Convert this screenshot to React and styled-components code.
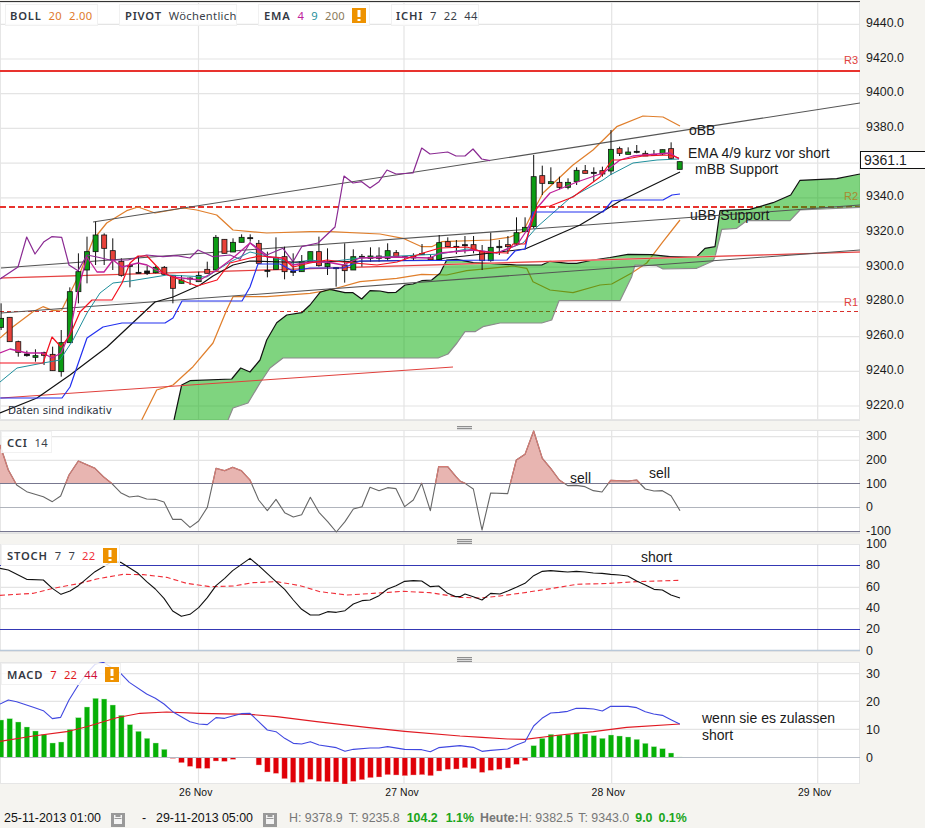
import React from 'react';
import styled, { createGlobalStyle } from 'styled-components';

const GlobalStyle = createGlobalStyle`
  html, body { margin: 0; padding: 0; background: #f5f4f0; }
  * { box-sizing: border-box; }
`;

const Root = styled.div`
  width: 925px;
  height: 828px;
  overflow: hidden;
  padding-top: 1px;
  background: #f5f4f0;
  font-family: "Liberation Sans", Arial, sans-serif;
  color: #222;
  display: flex;
  flex-direction: column;
`;
const PaneRow = styled.section`
  display: flex;
  height: ${p => p.$h}px;
  flex: none;
  position: relative;
`;
const ChartBox = styled.div`
  position: relative;
  width: 860px;
  height: 100%;
  flex: none;
  overflow: hidden;
  background: #fff;
  box-shadow: inset 0 0 0 1px #e6e6e6;
  border-top: ${p => (p.$top ? '1px solid #333' : '0')};
`;
const Plot = styled.svg`
  display: block;
  width: 860px;
  height: 100%;
`;
const Axis = styled.div`
  flex: 1;
  margin-top: ${p => p.$offset}px;
  padding-left: 6px;
  display: flex;
  flex-direction: column;
`;
const Tick = styled.div`
  height: ${p => p.$step}px;
  flex: none;
  display: flex;
  align-items: center;
  font-size: 12.4px;
  color: #1c1c1c;
`;
const LastPrice = styled.div`
  position: absolute;
  left: 860px;
  top: 150px;
  width: 65px;
  height: 18px;
  background: #fff;
  border: 1px solid #111;
  border-right: 0;
  padding-left: 3px;
  font-size: 14px;
  line-height: 16px;
  color: #222;
`;
const Handle = styled.div`
  height: ${p => p.$h}px;
  width: 860px;
  flex: none;
  border-top: 1px solid #e2e2e2;
  padding: ${p => p.$pad}px 0 0 457px;
`;
const Grip = styled.div`
  width: 15px;
  height: 5px;
  background: repeating-linear-gradient(#8f8f8f 0 1px, #dcdcdc 1px 2px);
`;
const LegendBar = styled.div`
  position: absolute;
  left: ${p => p.$left}px;
  top: ${p => p.$top}px;
  display: flex;
  gap: 21px;
`;
const Chip = styled.div`
  width: ${p => p.$w}px;
  height: 22px;
  padding-left: ${p => p.$pad || 5}px;
  display: flex;
  align-items: center;
  gap: 7px;
  background: rgba(255, 255, 255, 0.82);
  border: 1px solid rgba(240, 240, 240, 0.9);
  font-family: "Noto Sans", "Open Sans", sans-serif;
  font-size: 11.2px;
  white-space: nowrap;
`;
const ChipName = styled.b`
  font-weight: 600;
  letter-spacing: 0.8px;
  color: #333842;
`;
const ChipVal = styled.span`
  color: ${p => p.$c || '#3a3f4a'};
  letter-spacing: 0.3px;
`;
const Note = styled.span`
  position: absolute;
  left: ${p => p.$x}px;
  top: ${p => p.$y}px;
  font-size: ${p => p.$size || 14}px;
  line-height: 1;
  color: #1a1a1a;
  white-space: nowrap;
`;
const LevelTag = styled.span`
  position: absolute;
  right: 2px;
  top: ${p => p.$y}px;
  font-size: 11px;
  line-height: 1;
  color: ${p => p.$c};
`;
const Disclaimer = styled.span`
  position: absolute;
  left: 8px;
  top: 403px;
  font-family: "DejaVu Sans", sans-serif;
  font-size: 10.4px;
  line-height: 1;
  color: #2a3040;
  white-space: nowrap;
`;
const DateAxis = styled.div`
  height: 16px;
  width: 860px;
  flex: none;
  padding-left: 179px;
  display: flex;
  align-items: center;
`;
const DateLabel = styled.span`
  width: 206.3px;
  flex: none;
  font-size: 10.4px;
  letter-spacing: 0.1px;
  color: #111;
`;
const Footer = styled.footer`
  flex: 1;
  padding: 11px 0 0 4px;
  display: flex;
  align-items: flex-start;
  font-size: 12.4px;
  line-height: 14px;
  white-space: nowrap;
`;
const FooterItem = styled.span`
  margin-left: ${p => p.$ml || 0}px;
  color: ${p => p.$c || '#777'};
  font-weight: ${p => (p.$b ? 700 : 400)};
`;
const IconSlot = styled.span`
  margin-left: ${p => p.$ml || 0}px;
  margin-top: 2px;
  display: inline-flex;
  flex: none;
`;

const Warn = () => (
  <svg width="14" height="15" viewBox="0 0 14 15">
    <rect width="14" height="15" fill="#ee9200" />
    <rect x="5.5" y="2" width="3" height="7" fill="#fff" />
    <rect x="5.5" y="11" width="3" height="2" fill="#fff" />
  </svg>
);
const Calendar = ({ ml }) => (
  <IconSlot $ml={ml}>
    <svg width="14" height="14" viewBox="0 0 14 14">
      <rect width="14" height="14" fill="#999" />
      <rect x="3" y="4" width="8" height="7" fill="#f4f4f4" />
      <rect x="3" y="2" width="1.5" height="2" fill="#f4f4f4" />
      <rect x="9.5" y="2" width="1.5" height="2" fill="#f4f4f4" />
      <rect x="3.5" y="5" width="7" height="1" fill="#999" />
    </svg>
  </IconSlot>
);

const VGRID = [198.5, 404, 611.7, 817.7];
const pts = a => a.map(p => p.join(',')).join(' ');
const L = ({ d, c, w = 1, o = 1, dash }) => (
  <polyline points={pts(d)} fill="none" stroke={c} strokeWidth={w} opacity={o} strokeDasharray={dash} strokeLinejoin="round" />
);
const Grid = ({ ys, y1, y2 }) => (
  <g stroke="#e4e4e4" strokeWidth="1.2">
    {VGRID.map(x => <line key={x} x1={x} x2={x} y1={y1} y2={y2} />)}
    {ys.map(y => <line key={y} x1="0" x2="860" y1={y} y2={y} />)}
  </g>
);
const fromCrop = (ox, oy, a) => a.map(([x, y]) => [ox + x / 3, oy + y / 3]);

/* ---------- main chart data ---------- */
const candleX = i => 1.1 + 8.59 * i;
const segA = [
  [340,385,412,420,'g'],[382,382,455,455,'r'],[452,455,487,500,'r'],[482,492,497,500,'k'],[478,497,502,515,'g'],
  [485,488,496,525,'r'],[470,493,542,542,'r'],[420,458,545,560,'g'],[292,305,458,458,'g'],[190,245,305,340,'g'],
  [140,185,240,280,'g'],[95,135,185,225,'g'],[130,135,175,225,'r'],[145,182,210,240,'r'],[205,214,256,260,'r'],
  [220,226,229,292,'k'],[198,247,250,250,'k'],[228,243,250,255,'k'],[228,232,248,250,'g'],[228,232,253,255,'r'],
  [256,256,295,340,'r'],[255,270,280,280,'g'],[262,264,267,285,'k'],[245,256,275,275,'g'],[215,238,250,250,'r'],
  [135,142,240,240,'g'],[148,148,190,190,'r'],[145,157,186,186,'g'],[133,142,157,157,'g'],[133,143,146,155,'k'],
  [150,160,220,222,'r'],[185,241,244,262,'k'],[142,202,238,238,'g'],[170,200,245,268,'r'],[190,243,247,258,'k'],
  [195,215,245,245,'g'],[185,185,215,215,'g'],
];
const segB = [
  [320,365,407,410,'r'],[355,400,410,435,'g'],[413,413,416,470,'k'],[340,405,422,458,'r'],[358,380,420,420,'g'],
  [372,379,382,410,'k'],[352,378,385,395,'g'],[352,378,385,395,'r'],[340,362,385,392,'g'],[360,368,380,382,'r'],
  [378,380,383,390,'k'],[370,378,384,392,'r'],[342,371,374,375,'k'],[375,382,390,392,'r'],[315,338,390,392,'g'],
  [322,335,350,350,'r'],[330,349,352,372,'k'],[318,344,347,370,'k'],[318,344,360,370,'r'],[345,364,392,420,'r'],
  [308,352,392,395,'g'],[330,349,353,375,'k'],[318,344,350,372,'r'],[262,308,342,345,'g'],[262,292,305,305,'g'],
  [75,140,290,295,'g'],[107,137,160,195,'r'],[112,155,161,161,'g'],[140,157,172,178,'r'],[145,157,172,178,'g'],
  [112,121,155,165,'g'],[105,122,130,130,'r'],[112,127,130,155,'k'],[110,122,132,140,'r'],[0,58,123,135,'g'],
];
const segC = [
  [140,146,160,168,'r'],[142,156,163,163,'g'],[135,154,157,160,'k'],[152,160,168,168,'r'],[150,163,166,166,'k'],
  [149,149,162,165,'g'],[127,146,175,178,'r'],[185,185,208,208,'g'],
];
const scale = (oy, seg) => seg.map(([a, b, c, d, t]) => [oy + a / 3, oy + b / 3, oy + c / 3, oy + d / 3, t]);
const candles = [...scale(190, segA), ...scale(130, segB), ...scale(100, segC)];
const FILL = { g: '#0c9c14', r: '#e8423a', k: '#111' };

const cloudTop = [[174,420],[181.7,385],[190,380.7],[231.7,379],[240.7,368],[250,372],[260,360],[266.7,340],[276.7,322.7],[286.7,315],[301.7,312.7],[310,305],[320,292.3],[330,289.3],[345,292.7],[353,292.7],[361.7,299],[370,290.7],[380,291],[388,292.7],[396,292.3],[405,285],[413,284],[421.7,280.7],[431.7,280],[440,273.3],[446.7,260],[456.7,259.3],[473.3,262.7],[490,263.3],[516.7,265],[541.7,265],[550,261.3],[568,263.3],[576.7,263.3],[593,260],[610,257.5],[628,254.3],[651.7,254.7],[670,256.7],[696.7,256.7],[705,248.3],[715,246.7],[720,210.7],[750,209.3],[773,202.7],[790.7,195],[800,180.3],[836.7,178.7],[860,174]];
const cloudBottom = [[228,420],[233,408],[248,403],[260,383],[270,368],[283,358],[310,358],[438,358],[448,354],[457,343],[465,331.7],[475,331.7],[483,326.7],[500,323],[541.7,323],[551.7,320],[559,300.7],[620,300.7],[631.7,276.7],[635,265],[656.7,265.7],[663,269],[696.7,268.3],[713,261],[715,256.7],[721.7,229.3],[736.7,228.3],[746.7,220.7],[790,220.7],[800,210],[860,207.3]];
const bbUp = [[0,338],[13,326.7],[33,311.7],[43,306.7],[53,310.7],[61.7,310],[80,273],[93,240],[106.7,223],[126.7,210.7],[138,207],[155,213],[183,208],[196.7,210],[216.7,215],[233,230],[266.7,233],[310,231.7],[330,231.7],[380,234],[403,238.3],[421.7,246.7],[431.7,246.7],[441.7,241.7],[490,240],[510,237],[523,231.7],[533,211.7],[543,193],[573,165],[593,150],[616.7,126.7],[643,116],[663,117],[680,126]];
const bbLow = [[141.7,420],[156.7,390],[173,385],[193,366.7],[213,343],[226.7,310],[233,296.7],[266.7,296.7],[310,293.3],[330,290],[360,281.7],[396.7,278.3],[421.7,274.3],[446.7,275],[466.7,270.7],[513,266],[526.7,268.3],[533,281.7],[550,290],[573,292.7],[600,285],[611.7,284],[631.7,273],[646.7,263],[663,241.7],[680,220]];
const chikou = [[0,279],[18,267],[26.7,237],[35,254],[44,241.7],[51.7,236.7],[61.7,237.3],[69,265],[78,270.7],[87,255],[97,257],[110,260],[128,260],[146.7,255],[163,256.7],[176.7,255.7],[190,258],[198,250],[213,256.7],[230,255],[240,259.3],[250,242.7],[266.7,255],[283,248.3],[293,261.7],[301.7,246.7],[318,243],[335,227],[344,176],[353,183],[361.7,181.7],[370,188],[379,181.7],[387,170],[396,174],[413,173],[421.7,148],[430,154],[447.7,152],[456,156],[465,156],[473,149],[481.7,159],[490,160.7]];
const ema4 = [[0,353],[10,349],[27,353],[43,353],[52,358],[61,353],[70,333],[78,290],[87,257],[97,272],[104,272],[113,260],[122,267],[130,265],[138,263],[147,265],[156,270],[173,277],[200,280],[217,270],[233,258],[250,243],[267,257],[283,258],[293,265],[310,262],[327,262],[343,265],[360,258],[397,257],[430,258],[440,253],[473,250],[497,253],[517,245],[527,230],[537,208],[550,193],[577,182],[603,173],[620,160],[633,156],[657,154],[670,153],[679,159]];
const redLine = [[0,363],[43,363],[52,337],[61,347],[70,335],[80,312],[92,300],[112,300],[122,283],[130,263],[138,256],[147,256],[163,273],[173,277],[197,286],[217,280],[230,263],[250,258],[260,256],[283,258],[293,267],[310,263],[327,260],[343,262],[377,265],[397,262],[423,253],[440,248],[467,247],[483,252],[507,253],[513,244],[525,244],[537,207],[550,206],[573,197],[600,177],[612,160],[620,160],[643,156],[670,155],[679,158]];
const teal = [[0,382],[17,368],[43,363],[60,360],[73,340],[87,313],[100,293],[113,283],[130,281],[167,275],[207,277],[217,270],[230,262],[250,252],[267,256],[293,263],[310,260],[327,262],[360,258],[440,254],[467,249],[497,253],[523,243],[537,227],[570,198],[603,180],[610,175],[633,163],[657,160],[679,159]];
const blue = [[0,398],[62,398],[70,387],[87,338],[103,327],[122,323],[165,323],[173,318],[182,301],[242,301],[250,287],[258,264],[280,264],[293,271],[310,268],[343,268],[360,261],[507,260],[515,251],[525,249],[533,212],[603,212],[612,201],[620,200],[663,200],[672,195],[680,194]];
const black = [[0,413],[37,398],[70,375],[107,347],[155,302],[173,297],[200,285],[213,276],[233,265],[250,261],[283,262],[310,262],[437,260],[445,258],[465,256],[525,249],[580,225],[620,201],[680,172]];

const MainPlot = () => (
  <Plot viewBox="0 2 860 418" preserveAspectRatio="none">
    <Grid ys={Array.from({ length: 12 }, (_, i) => 24.3 + i * 34.7)} y1={2} y2={420} />
    <L d={[[0,71],[860,71]]} c="#e8332e" w={2} />
    <L d={[[0,207],[860,207]]} c="#e8332e" w={2} dash="6 3" />
    <L d={[[0,311.5],[860,311.5]]} c="#d8302c" w={1} dash="4 3" />
    <L d={bbUp} c="#e07f2c" w={1.25} />
    <L d={bbLow} c="#e07f2c" w={1.25} />
    <polygon points={pts([...cloudTop, ...[...cloudBottom].reverse()])} fill="rgba(0,170,0,0.5)" />
    <L d={cloudTop} c="#111" w={1.2} />
    <L d={cloudBottom} c="#8c8c8c" w={1.2} />
    <L d={[[1,398],[453,367]]} c="#e0403c" w={1} />
    <L d={[[1,278],[860,252]]} c="#f6bcbc" w={1.6} />
    <L d={[[1,278],[860,252]]} c="#e01818" w={0.8} />
    <L d={[[93,222],[860,103]]} c="#555" w={1.1} />
    <L d={[[1,268],[860,205]]} c="#555" w={1.1} />
    <L d={[[1,313],[860,250]]} c="#555" w={1.1} />
    {candles.map(([wt, bt, bb, wb, t], i) => {
      const x = candleX(i);
      return (
        <g key={i}>
          <line x1={x} x2={x} y1={wt} y2={wb} stroke="#111" strokeWidth="1" />
          <rect x={x - 2.5} y={bt} width="5" height={Math.max(bb - bt, 1)} fill={FILL[t]} stroke="#111" strokeWidth="0.8" />
        </g>
      );
    })}
    <L d={chikou} c="#8a2a92" w={1.2} />
    <L d={teal} c="#1f8f9c" />
    <L d={black} c="#111" w={1.2} />
    <L d={blue} c="#2230f0" w={1.2} />
    <L d={ema4} c="#c0209a" w={1.3} />
    <L d={redLine} c="#f4101e" w={1.2} />
  </Plot>
);

/* ---------- CCI ---------- */
const cciPts = [
  ...fromCrop(0, 420, [[0,75],[25,150],[50,195],[80,215],[130,230],[157,245],[182,228],[207,165],[235,123],[285,145],[310,170],[335,190],[362,218],[388,231],[414,228],[440,237],[466,238],[492,246],[518,298],[544,298],[570,322],[596,303],[622,262],[648,145],[674,152],[698,142],[724,152],[750,180],[776,240],[802,272],[828,238],[854,278],[880,291],[905,284],[931,232],[957,277],[983,305],[1009,336],[1035,305],[1060,267],[1086,260],[1110,202],[1137,212],[1163,203],[1188,206],[1214,260],[1240,240],[1265,190],[1291,272],[1316,140],[1343,140],[1368,170]]),
  ...fromCrop(460, 420, [[0,183],[15,190],[40,207],[66,330],[92,219],[143,221],[169,120],[195,103],[221,33],[247,115],[272,145],[298,180],[323,197],[349,196],[375,200],[400,212],[426,216],[452,181],[503,183],[530,180],[556,207],[582,213],[607,212],[633,227],[660,272]]),
];
const CciPlot = () => (
  <Plot viewBox="0 430 860 103" preserveAspectRatio="none">
    <defs>
      <clipPath id="above"><rect x="0" y="430" width="860" height="53.5" /></clipPath>
    </defs>
    <Grid ys={[436.7, 460.3]} y1={430} y2={533} />
    <polygon clipPath="url(#above)" points={pts([[0,533], ...cciPts, [680,533]])} fill="#e8b5b1" />
    <L d={[[0,483.5],[860,483.5]]} c="#77778f" w={1} />
    <L d={[[0,507.5],[860,507.5]]} c="#b0b4bc" w={1} />
    <L d={[[0,531.5],[860,531.5]]} c="#77778f" w={1} />
    <L d={cciPts} c="#666" w={1.1} />
    <g clipPath="url(#above)"><L d={cciPts} c="#d47b74" w={1.2} /></g>
  </Plot>
);

/* ---------- STOCH ---------- */
const stochK = [
  ...fromCrop(0, 420, [[0,445],[25,450],[80,478],[130,480],[157,505],[183,523],[210,513],[235,497],[285,455],[310,440],[335,425],[362,427],[414,460],[440,485],[466,507],[492,535],[518,573],[544,589],[570,583],[596,563],[622,533],[648,497],[674,475],[698,452],[750,415],[776,437],[828,485],[854,508],[880,540],[905,568],[931,585],[957,585],[983,575],[1009,577],[1035,572],[1060,552],[1086,542],[1110,540],[1137,527],[1163,507],[1188,497],[1214,484],[1240,482],[1265,483],[1291,500],[1316,498],[1343,520],[1368,530]]),
  ...fromCrop(460, 420, [[0,530],[15,522],[40,530],[66,540],[92,520],[120,522],[143,513],[169,502],[195,490],[221,467],[247,454],[272,452],[298,454],[323,456],[349,454],[375,456],[400,459],[426,460],[452,463],[478,465],[503,468],[530,483],[556,495],[582,508],[607,510],[633,525],[660,534]]),
];
const stochD = [
  ...fromCrop(0, 420, [[0,526],[50,523],[100,520],[160,505],[240,490],[290,477],[370,463],[430,464],[500,472],[560,490],[630,500],[700,498],[760,488],[830,485],[900,497],[960,515],[1040,525],[1120,520],[1210,514],[1290,518],[1380,532]]),
  ...fromCrop(460, 420, [[60,534],[120,528],[200,517],[290,503],[350,493],[450,490],[530,485],[660,481]]),
];
const StochPlot = () => (
  <Plot viewBox="0 544 860 107" preserveAspectRatio="none">
    <Grid ys={[587.3, 608.7]} y1={544} y2={650} />
    <L d={[[0,565.5],[860,565.5]]} c="#3438b4" w={1} />
    <L d={[[0,629.5],[860,629.5]]} c="#3438b4" w={1} />
    <L d={[[0,650.5],[860,650.5]]} c="#b9c8d8" w={1.4} />
    <L d={stochD} c="#f0303a" w={1.1} dash="5 3" />
    <L d={stochK} c="#111" w={1.1} />
  </Plot>
);

/* ---------- MACD ---------- */
const macdTops = [
  ...[210,206,216,231,243,254,279,276,238,203,171,145,147,165,196,224,244,265,279,298,325,338,349,355,355,333,334,328,323,323,345,366,370,386,397,397,388,394,395,396,402,394,389,383,381,374,375,377,375,374,377,363,358,357],
  ...[353,356,367,361,358,354,343,332,287,265,253,255,253,248,252,257,265,255,258,261,268,280,290,296,309,321],
];
const ZERO = 757.5;
const macdLine = [
  ...fromCrop(0, 650, [[0,162],[25,150],[50,155],[100,172],[130,182],[157,206],[182,202],[207,150],[235,105],[260,70],[285,43],[310,37],[362,70],[388,97],[440,132],[466,145],[492,162],[518,185],[544,200],[570,215],[596,222],[622,224],[648,203],[674,205],[698,198],[724,191],[750,190],[776,215],[802,240],[828,245],[854,265],[880,280],[905,282],[931,275],[957,285],[1009,293],[1035,304],[1060,298],[1110,294],[1137,294],[1163,290],[1214,298],[1265,299],[1291,305],[1316,293]]),
  ...fromCrop(460, 650, [[0,287],[40,292],[66,304],[92,301],[143,297],[169,285],[195,275],[221,228],[246,205],[272,189],[298,187],[323,184],[349,175],[375,175],[401,177],[427,183],[452,169],[504,169],[530,173],[556,185],[581,192],[607,196],[633,209],[659,222]]),
];
const macdSig = [
  ...fromCrop(0, 650, [[0,274],[100,258],[200,245],[260,230],[350,203],[420,190],[500,186],[600,190],[750,193],[830,200],[950,215],[1100,232],[1214,244],[1380,258]]),
  ...fromCrop(460, 650, [[66,262],[143,267],[195,268],[300,255],[400,245],[500,232],[660,222]]),
];
const MacdPlot = () => (
  <Plot viewBox="0 662 860 122" preserveAspectRatio="none">
    <Grid ys={[673.7, 701.3, 729.3]} y1={662} y2={784} />
    {macdTops.map((t, i) => {
      const y = 650 + t / 3;
      const up = y < ZERO;
      return (
        <rect key={i} x={candleX(i) - 2.7} y={up ? y : ZERO} width="5.4" height={Math.abs(y - ZERO)}
          fill={up ? '#06b006' : '#e00008'} stroke={up ? '#b8e8b8' : '#f0b0b0'} strokeWidth="0.4" />
      );
    })}
    <L d={[[0,757.5],[860,757.5]]} c="#b4bac4" w={1.2} />
    <L d={macdSig} c="#e01a22" w={1.1} />
    <L d={macdLine} c="#4048e0" w={1.1} />
  </Plot>
);

const ticks = (vals, step) => vals.map(v => <Tick key={v} $step={step}>{v}</Tick>);

export default function App() {
  return (
    <Root>
      <GlobalStyle />
      <PaneRow $h={419}>
        <ChartBox $top>
          <MainPlot />
          <LegendBar $left={5} $top={2}>
            <Chip $w={93} $pad={4}>
              <ChipName>BOLL</ChipName>
              <ChipVal $c="#e07a2a">20</ChipVal>
              <ChipVal $c="#e07a2a">2.00</ChipVal>
            </Chip>
            <Chip $w={118} $pad={5}>
              <ChipName>PIVOT</ChipName>
              <ChipVal>Wöchentlich</ChipVal>
            </Chip>
            <Chip $w={112} $pad={5}>
              <ChipName>EMA</ChipName>
              <ChipVal $c="#c0209a">4</ChipVal>
              <ChipVal $c="#1f8f9c">9</ChipVal>
              <ChipVal $c="#8a7a5a">200</ChipVal>
              <Warn />
            </Chip>
            <Chip $w={88} $pad={4}>
              <ChipName>ICHI</ChipName>
              <ChipVal>7</ChipVal>
              <ChipVal>22</ChipVal>
              <ChipVal>44</ChipVal>
            </Chip>
          </LegendBar>
          <LevelTag $y={53} $c="#e0403c">R3</LevelTag>
          <LevelTag $y={189} $c="#a88a30">R2</LevelTag>
          <LevelTag $y={295} $c="#e0403c">R1</LevelTag>
          <Disclaimer>Daten sind indikativ</Disclaimer>
          <Note $x={689} $y={121}>oBB</Note>
          <Note $x={688} $y={144}>EMA 4/9 kurz vor short</Note>
          <Note $x={695} $y={160}>mBB Support</Note>
          <Note $x={690} $y={206}>uBB Support</Note>
        </ChartBox>
        <Axis $offset={4.6}>{ticks(['9440.0','9420.0','9400.0','9380.0','9360.0','9340.0','9320.0','9300.0','9280.0','9260.0','9240.0','9220.0'].map((v, i) => (i === 4 ? '\u00a0' : v)), 34.7)}</Axis>
        <LastPrice>9361.1</LastPrice>
      </PaneRow>
      <Handle $h={10} $pad={5}><Grip /></Handle>
      <PaneRow $h={103}>
        <ChartBox>
          <CciPlot />
          <LegendBar $left={1} $top={1}>
            <Chip $w={51}>
              <ChipName>CCI</ChipName>
              <ChipVal>14</ChipVal>
            </Chip>
          </LegendBar>
          <Note $x={570} $y={41}>sell</Note>
          <Note $x={649} $y={36}>sell</Note>
        </ChartBox>
        <Axis $offset={-5.9}>{ticks(['300','200','100','0','-100'], 23.8)}</Axis>
      </PaneRow>
      <Handle $h={11} $pad={5}><Grip /></Handle>
      <PaneRow $h={107}>
        <ChartBox>
          <StochPlot />
          <LegendBar $left={1} $top={0}>
            <Chip $w={119}>
              <ChipName>STOCH</ChipName>
              <ChipVal>7</ChipVal>
              <ChipVal>7</ChipVal>
              <ChipVal $c="#f0303a">22</ChipVal>
              <Warn />
            </Chip>
          </LegendBar>
          <Note $x={641} $y={6}>short</Note>
        </ChartBox>
        <Axis $offset={-10.6}>{ticks(['100','80','60','40','20','0'], 21.3)}</Axis>
      </PaneRow>
      <Handle $h={11} $pad={5}><Grip /></Handle>
      <PaneRow $h={122}>
        <ChartBox>
          <MacdPlot />
          <LegendBar $left={1} $top={1}>
            <Chip $w={120}>
              <ChipName>MACD</ChipName>
              <ChipVal $c="#e01a22">7</ChipVal>
              <ChipVal $c="#e01a22">22</ChipVal>
              <ChipVal $c="#d0103a">44</ChipVal>
              <Warn />
            </Chip>
          </LegendBar>
          <Note $x={702} $y={49}>wenn sie es zulassen</Note>
          <Note $x={702} $y={66}>short</Note>
        </ChartBox>
        <Axis $offset={-2.3}>{ticks(['30','20','10','0'], 28)}</Axis>
      </PaneRow>
      <DateAxis>
        <DateLabel>26 Nov</DateLabel>
        <DateLabel>27 Nov</DateLabel>
        <DateLabel>28 Nov</DateLabel>
        <DateLabel>29 Nov</DateLabel>
      </DateAxis>
      <Footer>
        <FooterItem $c="#111">25-11-2013 01:00</FooterItem>
        <Calendar ml={10} />
        <FooterItem $c="#111" $ml={17}>-</FooterItem>
        <FooterItem $c="#111" $ml={10}>29-11-2013 05:00</FooterItem>
        <Calendar ml={10} />
        <FooterItem $ml={12}>H: 9378.9</FooterItem>
        <FooterItem $ml={6}>T: 9235.8</FooterItem>
        <FooterItem $c="#1aa51a" $b $ml={7}>104.2</FooterItem>
        <FooterItem $c="#1aa51a" $b $ml={8}>1.1%</FooterItem>
        <FooterItem $b $ml={6}>Heute:</FooterItem>
        <FooterItem $ml={1}>H: 9382.5</FooterItem>
        <FooterItem $ml={5}>T: 9343.0</FooterItem>
        <FooterItem $c="#1aa51a" $b $ml={6}>9.0</FooterItem>
        <FooterItem $c="#1aa51a" $b $ml={6}>0.1%</FooterItem>
      </Footer>
    </Root>
  );
}
